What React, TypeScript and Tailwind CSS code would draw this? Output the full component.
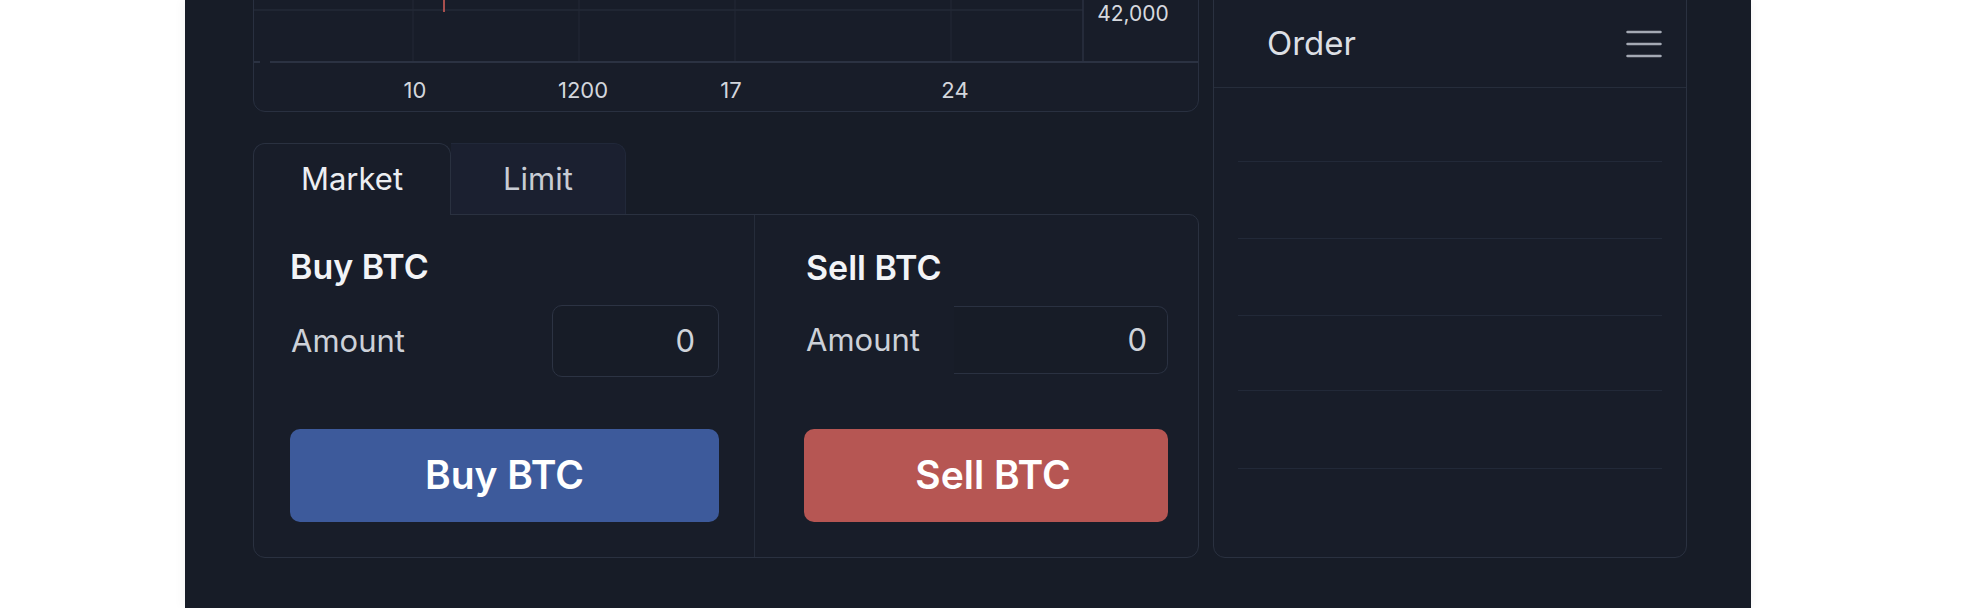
import React from "react";

const font = { fontFamily: "Inter, 'Noto Sans', sans-serif" };

function Chart() {
  const vLines = [159, 325, 481, 697];
  const labels: { t: string; x: number }[] = [
    { t: "10", x: 161 },
    { t: "1200", x: 329 },
    { t: "17", x: 477 },
    { t: "24", x: 701 },
  ];
  return (
    <div className="relative h-[300px] w-full overflow-hidden rounded-[12px] border border-[#293040] bg-[#181d29]">
      <svg className="absolute inset-0" width="944" height="298" viewBox="0 0 944 298">
        {[60, 130, 197].map((y) => (
          <line key={y} x1="0" x2="829" y1={y} y2={y} stroke="#232a37" strokeWidth="1.5" />
        ))}
        {vLines.map((x) => (
          <line key={x} x1={x} x2={x} y1="0" y2="249" stroke="#222937" strokeWidth="1" />
        ))}
        <line x1="829" x2="829" y1="0" y2="249" stroke="#2a3141" strokeWidth="1.5" />
        <line x1="0" x2="6" y1="249" y2="249" stroke="#2b3242" strokeWidth="2" />
        <line x1="16" x2="944" y1="249" y2="249" stroke="#2b3242" strokeWidth="2" />
        <rect x="184" y="90" width="12" height="60" fill="#d25c55" />
        <line x1="190" x2="190" y1="70" y2="199" stroke="#d9605a" strokeWidth="1.5" />
      </svg>
      <div className="absolute left-[879px] top-[200px] -translate-x-1/2 -translate-y-1/2 text-[21px] leading-none text-[#d6d9df]">
        42,000
      </div>
      {labels.map((l) => (
        <div
          key={l.t}
          className="absolute top-[277px] -translate-x-1/2 -translate-y-1/2 text-[22px] leading-none text-[#d3d6dc]"
          style={{ left: l.x }}
        >
          {l.t}
        </div>
      ))}
    </div>
  );
}

function Hamburger() {
  return (
    <svg width="36" height="28" viewBox="0 0 36 28">
      <line x1="1.5" x2="34.5" y1="2" y2="2" stroke="#a4a9b4" strokeWidth="2.5" strokeLinecap="round" />
      <line x1="1.5" x2="34.5" y1="14" y2="14" stroke="#a4a9b4" strokeWidth="2.5" strokeLinecap="round" />
      <line x1="1.5" x2="34.5" y1="26" y2="26" stroke="#a4a9b4" strokeWidth="2.5" strokeLinecap="round" />
    </svg>
  );
}

export default function App() {
  const rows = [74, 77, 77, 75, 78];
  return (
    <div className="h-[608px] w-full overflow-hidden bg-white pl-[185px]" style={font}>
      <div className="flex h-full w-[1566px] flex-col justify-end bg-[#171c27] pb-[50px] pl-[68px] shadow-[0_0_12px_rgba(0,0,0,0.06)]">
        <div className="flex items-end gap-[14px]">
          {/* Left column */}
          <div className="flex w-[946px] flex-col">
            <Chart />
            <div className="mt-[31px] flex h-[71px] items-end">
              <div className="relative z-10 -mb-px flex h-[72px] w-[198px] items-center justify-center rounded-t-[12px] border border-b-0 border-[#2a3140] bg-[#181d29] text-[31px] text-[#eceef2]">
                Market
              </div>
              <div className="flex h-[71px] w-[175px] items-center justify-center rounded-tr-[12px] border-r border-t border-[#212839] bg-[#1b2030] text-[31px] text-[#c8ccd4]">
                Limit
              </div>
            </div>
            <div className="flex h-[344px] rounded-b-[12px] rounded-tr-[10px] border border-[#2a3140] bg-[#181d29]">
              <div className="flex w-[501px] flex-col border-r border-[#252c3a] pl-[36px] pr-[35px] pt-[34px]">
                <div className="h-[36px] text-[34px] font-semibold leading-[36px] text-[#f2f4f7]">Buy BTC</div>
                <div className="mt-[20px] flex h-[72px] items-center justify-between">
                  <span className="pl-[1px] text-[31px] text-[#cdd1d8]">Amount</span>
                  <div className="flex h-[72px] w-[167px] items-center justify-end rounded-[10px] border border-[#2c3343] bg-[#171c27] pr-[23px] text-[31px] text-[#cfd3da]">
                    0
                  </div>
                </div>
                <button className="mt-[52px] flex h-[93px] w-full items-center justify-center rounded-[10px] bg-[#3d5a9b] text-[39px] font-semibold text-white">
                  Buy BTC
                </button>
              </div>
              <div className="flex flex-1 flex-col pl-[49px] pr-[30px] pt-[35px]">
                <div className="h-[36px] pl-[2px] text-[34px] font-semibold leading-[36px] text-[#f2f4f7]">Sell BTC</div>
                <div className="mt-[20px] flex h-[68px] items-center justify-between">
                  <span className="pl-[2px] text-[31px] text-[#cdd1d8]">Amount</span>
                  <div className="flex h-[68px] w-[214px] items-center justify-end rounded-r-[10px] border-y border-r border-[#2a3141] bg-[#171c27] pr-[20px] text-[31px] text-[#cfd3da]">
                    0
                  </div>
                </div>
                <button className="mt-[55px] flex h-[93px] w-full items-center justify-center rounded-[10px] bg-[#b65653] pl-[14px] text-[39px] font-semibold text-white">
                  Sell BTC
                </button>
              </div>
            </div>
          </div>
          {/* Right column */}
          <div className="flex h-[572px] w-[474px] flex-col rounded-[12px] border border-[#2a3140] bg-[#181d29]">
            <div className="flex h-[101px] shrink-0 items-center justify-between border-b border-[#262d3b] pl-[53px] pr-[24px] pt-[14px]">
              <span className="text-[33px] text-[#dcdfe4]">Order</span>
              <Hamburger />
            </div>
            {rows.map((h, i) => (
              <div key={i} className="shrink-0 px-[24px]" style={{ height: h }}>
                <div className="h-full border-b border-[#222938]" />
              </div>
            ))}
          </div>
        </div>
      </div>
    </div>
  );
}
